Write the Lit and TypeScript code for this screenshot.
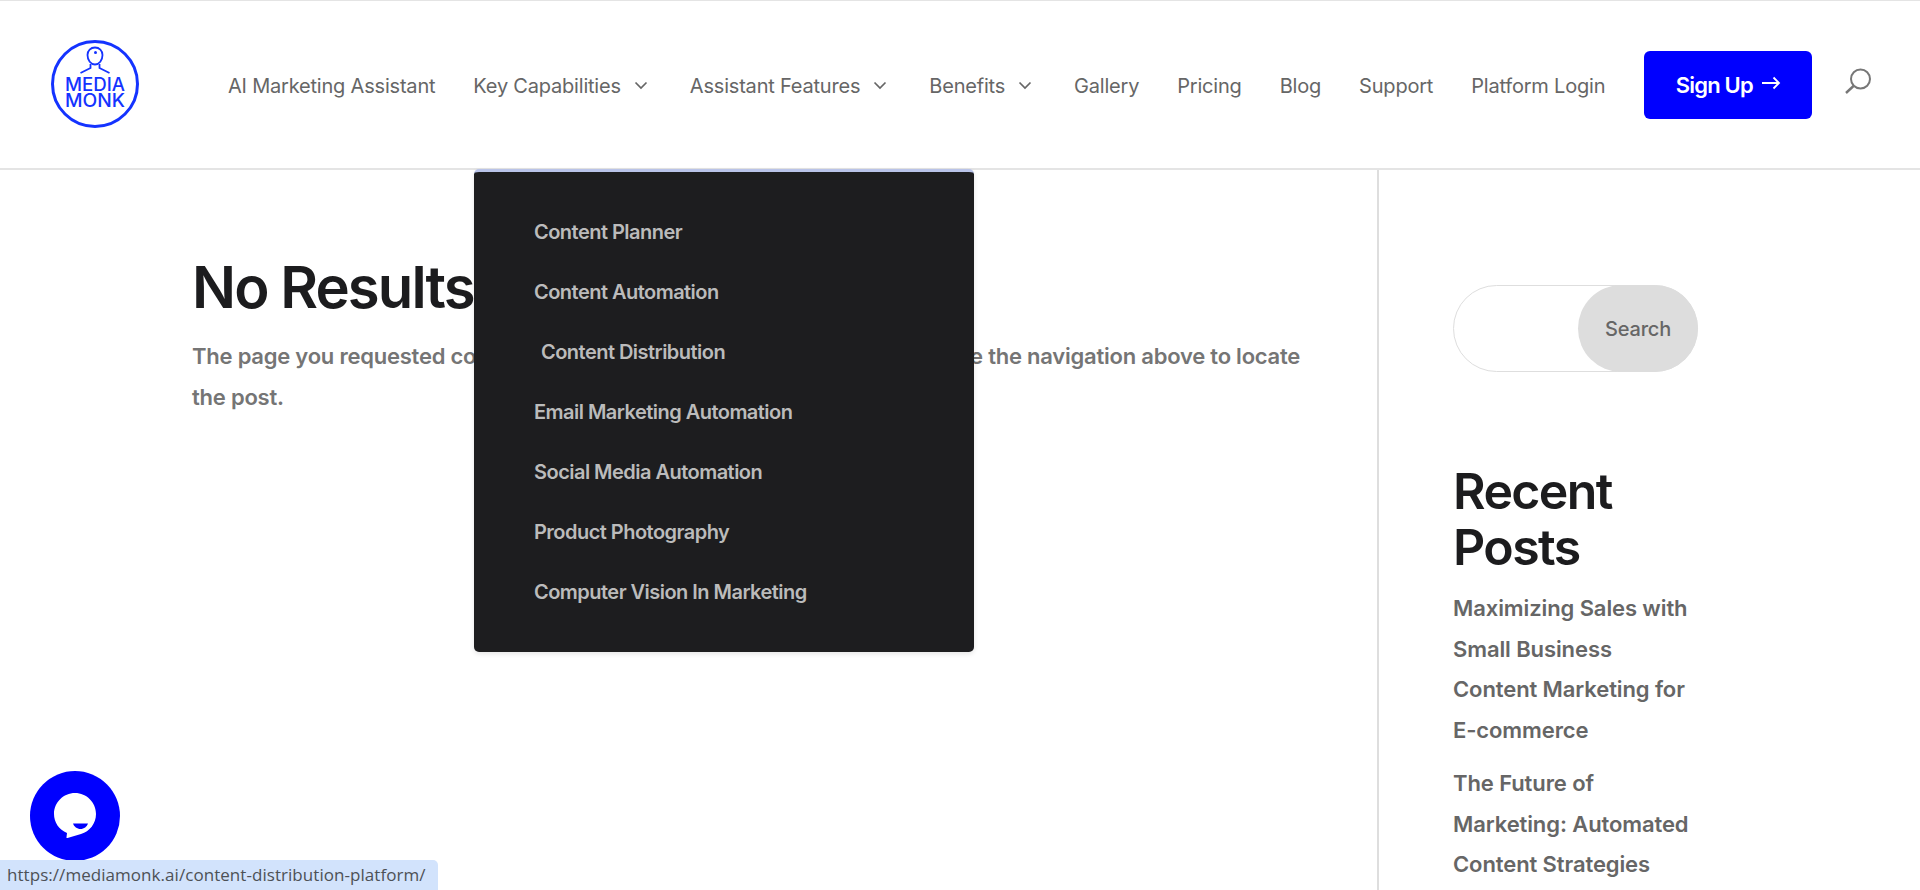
import { LitElement, html, css } from "lit";
import { customElement } from "lit/decorators.js";

const chev = html`<svg class="chev" width="14" height="9" viewBox="0 0 14 9"><path d="M1.500 1.500 7 7l5.500-5.500" fill="none" stroke="#666" stroke-width="1.700"/></svg>`;

@customElement("app-root")
export class AppRoot extends LitElement {
  static styles = css`
    :host { display: block; height: 890px; overflow: hidden; position: relative; background: #fff; font-family: Inter, "Liberation Sans", sans-serif; color: #666; }
    * { box-sizing: border-box; }
    header { height: 170px; border-top: 1px solid #e4e4e4; border-bottom: 2px solid #e4e4e4; display: flex; align-items: center; padding: 0 48px 0 51px; }
    .logo { width: 88px; height: 88px; flex: none; margin-right: 89px; display: block; margin-top: -2px; }
    nav { display: flex; align-items: center; font-size: 20px; font-weight: 400; letter-spacing: -0.2px; color: #666; padding-top: 2px; }
    nav a { margin-right: 38px; display: flex; align-items: center; white-space: nowrap; }
    nav a .chev { margin-left: 13px; margin-right: 4px; }
    .signup { width: 168px; height: 68px; margin-left: 1px; background: #0000ff; color: #fff; border-radius: 6px; display: flex; align-items: center; justify-content: center; gap: 8px; font-size: 22px; font-weight: 600; letter-spacing: -0.8px; flex: none; }
    .signup svg { margin-top: -4px; }
    .srch { margin-left: 32px; margin-top: -6px; flex: none; display: block; }
    .body { display: grid; grid-template-columns: 1379px 1fr; height: 720px; }
    main { border-right: 2px solid #dedede; padding: 81px 70px 0 192px; }
    h1 { margin: 0; font-size: 58px; line-height: 72px; font-weight: 600; color: #1c1c1e; letter-spacing: -1.900px; }
    main p { margin: 13px 0 0; font-size: 22px; line-height: 41px; font-weight: 600; color: #757575; letter-spacing: -0.23px; }
    aside { padding: 115px 0 0 74px; }
    .search { width: 245px; height: 87px; border: 1px solid #dedede; border-radius: 44px; position: relative; display: flex; justify-content: flex-end; }
    .search span { width: 120px; height: 87px; margin: -1px -1px 0 0; background: #dddddd; border-radius: 44px; display: flex; align-items: center; justify-content: center; font-size: 20px; font-weight: 500; letter-spacing: -0.2px; color: #666; }
    h2 { margin: 91px 0 0; width: 245px; font-size: 50px; line-height: 56px; font-weight: 600; color: #1c1c1e; letter-spacing: -1.600px; }
    ul { list-style: none; margin: 13px 0 0; padding: 0; width: 245px; }
    aside li { font-size: 22px; line-height: 40.700px; font-weight: 600; color: #666; letter-spacing: -0.1px; margin-bottom: 12px; }
    .drop { position: absolute; left: 474px; top: 169px; width: 500px; height: 483px; background: #1d1d1f; border-top: 3px solid #b9c3e8; border-radius: 5px; padding: 30px 0 0 60px; box-shadow: 0 2px 5px rgba(0,0,0,.1); }
    .drop a { display: block; height: 60px; line-height: 60px; font-size: 20px; font-weight: 600; letter-spacing: -0.530px; color: #bbbbbb; white-space: nowrap; }
    .drop a.hov { padding-left: 7px; }
    .chat { position: absolute; left: 30px; top: 771px; width: 90px; height: 90px; display: block; }
    .status { position: absolute; left: 0; top: 860px; width: 438px; height: 30px; background: #d2e3fc; border-top-right-radius: 5px; padding: 0 0 0 7px; font-family: "Open Sans", "Noto Sans", sans-serif; font-size: 17px; letter-spacing: 0.05px; line-height: 30px; color: #4d5156; white-space: nowrap; }
  `;

  render() {
    const items: [string, boolean][] = [["AI Marketing Assistant", false], ["Key Capabilities", true], ["Assistant Features", true], ["Benefits", true], ["Gallery", false], ["Pricing", false], ["Blog", false], ["Support", false], ["Platform Login", false]];
    const drop = ["Content Planner", "Content Automation", "Content Distribution", "Email Marketing Automation", "Social Media Automation", "Product Photography", "Computer Vision In Marketing"];
    return html`
      <header>
        <svg class="logo" viewBox="0 0 88 88">
          <circle cx="44" cy="44" r="42.500" fill="none" stroke="#1433ff" stroke-width="3"/>
          <g fill="none" stroke="#1433ff" stroke-width="1.800">
            <path d="M36.500 15c0-4.500 3.200-7.500 7.500-7.500s7.500 3 7.500 7.500c0 2.500-.8 5-2.200 6.800-1.400 1.800-3.300 2.700-5.300 2.700s-3.900-.9-5.300-2.700c-1.400-1.800-2.200-4.300-2.200-6.800Z"/>
            <path d="M39.500 24v4l-10 5M48.500 24v4l10 5"/>
          </g>
          <circle cx="44.500" cy="12.500" r="1.500" fill="#1433ff"/>
          <text x="14" y="51" textLength="60" lengthAdjust="spacingAndGlyphs" font-family="Inter, sans-serif" font-size="18" font-weight="500" fill="#1433ff">MEDIA</text>
          <text x="14" y="67" textLength="60" lengthAdjust="spacingAndGlyphs" font-family="Inter, sans-serif" font-size="18" font-weight="500" fill="#1433ff">MONK</text>
        </svg>
        <nav>
          ${items.map(([t, c]) => html`<a>${t}${c ? chev : ""}</a>`)}
        </nav>
        <div class="signup">Sign Up
          <svg width="20" height="14" viewBox="0 0 20 14"><path d="M1 7h17M12.500 1.500 18 7l-5.500 5.500" fill="none" stroke="#fff" stroke-width="1.800"/></svg>
        </div>
        <svg class="srch" width="28" height="28" viewBox="0 0 28 28"><circle cx="16.500" cy="11" r="9.500" fill="none" stroke="#777" stroke-width="2"/><path d="M9.500 18 2 25" fill="none" stroke="#777" stroke-width="2.400"/></svg>
      </header>
      <div class="body">
        <main>
          <h1>No Results Found</h1>
          <p>The page you requested could not be found. Try refining your search, or use the navigation above to locate the post.</p>
        </main>
        <aside>
          <div class="search"><span>Search</span></div>
          <h2>Recent Posts</h2>
          <ul>
            <li>Maximizing Sales with Small Business Content Marketing for E-commerce</li>
            <li>The Future of Marketing: Automated Content Strategies</li>
          </ul>
        </aside>
      </div>
      <div class="drop">
        ${drop.map((d, i) => html`<a class=${i === 2 ? "hov" : ""}>${d}</a>`)}
      </div>
      <svg class="chat" viewBox="0 0 90 90">
        <circle cx="45" cy="45" r="45" fill="#0000ff"/>
        <path d="M45 22c11.600 0 21 9.400 21 21 0 9.500-6.400 17.500-15 20l-13.500 4c-.8.200-1.200 0-1-.8l.5-4.200C29 58.500 24 51.500 24 43c0-11.600 9.400-21 21-21Z" fill="#fff"/>
        <path d="M43 52.500h15c-1 3-4 5.500-7.500 5.500s-6.500-2.500-7.500-5.500Z" fill="#0000ff"/>
      </svg>
      <div class="status">https://mediamonk.ai/content-distribution-platform/</div>
    `;
  }
}
